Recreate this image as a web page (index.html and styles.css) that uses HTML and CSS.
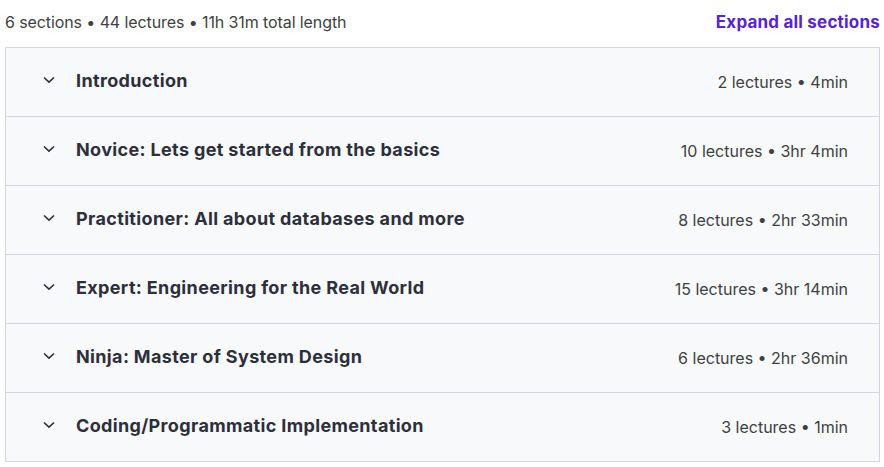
FILE: index.html
```html
<!DOCTYPE html>
<html lang="en">
<head>
    <meta charset="UTF-8">
    <title>Course content</title>
    <link rel="stylesheet" href="styles.css">
</head>
<body>
    <div class="curriculum">
        <div class="summary">
            <span class="summary-text">6 sections • 44 lectures • 11h 31m total length</span>
            <button class="expand-all">Expand all sections</button>
        </div>
        <div class="sections">
            <div class="section">
                <svg class="chevron" viewBox="0 0 12 8" width="12" height="8"><path d="M1 1.5 L6 6.2 L11 1.5" /></svg>
                <span class="section-title">Introduction</span>
                <span class="section-meta">2 lectures • 4min</span>
            </div>
            <div class="section">
                <svg class="chevron" viewBox="0 0 12 8" width="12" height="8"><path d="M1 1.5 L6 6.2 L11 1.5" /></svg>
                <span class="section-title">Novice: Lets get started from the basics</span>
                <span class="section-meta">10 lectures • 3hr 4min</span>
            </div>
            <div class="section">
                <svg class="chevron" viewBox="0 0 12 8" width="12" height="8"><path d="M1 1.5 L6 6.2 L11 1.5" /></svg>
                <span class="section-title">Practitioner: All about databases and more</span>
                <span class="section-meta">8 lectures • 2hr 33min</span>
            </div>
            <div class="section">
                <svg class="chevron" viewBox="0 0 12 8" width="12" height="8"><path d="M1 1.5 L6 6.2 L11 1.5" /></svg>
                <span class="section-title">Expert: Engineering for the Real World</span>
                <span class="section-meta">15 lectures • 3hr 14min</span>
            </div>
            <div class="section">
                <svg class="chevron" viewBox="0 0 12 8" width="12" height="8"><path d="M1 1.5 L6 6.2 L11 1.5" /></svg>
                <span class="section-title">Ninja: Master of System Design</span>
                <span class="section-meta">6 lectures • 2hr 36min</span>
            </div>
            <div class="section">
                <svg class="chevron" viewBox="0 0 12 8" width="12" height="8"><path d="M1 1.5 L6 6.2 L11 1.5" /></svg>
                <span class="section-title">Coding/Programmatic Implementation</span>
                <span class="section-meta">3 lectures • 1min</span>
            </div>
        </div>
    </div>
</body>
</html>
```

FILE: styles.css
```css
body {
    margin: 0;
    font-family: Inter, "Noto Sans", sans-serif;
    color: #2d2f31;
    background: #fff;
}
.curriculum {
    width: 875px;
    margin-left: 5px;
}
.summary {
    display: flex;
    justify-content: space-between;
    align-items: center;
    height: 44px;
    padding-bottom: 3px;
}
.summary-text {
    font-size: 16px;
    letter-spacing: -0.1px;
    color: #3e4143;
}
.expand-all {
    background: none;
    border: none;
    padding: 0;
    font-family: inherit;
    font-size: 17px;
    font-weight: 700;
    letter-spacing: 0.2px;
    color: #5624d0;
    cursor: pointer;
}
.sections {
    border: 1px solid #d1d7dc;
}
.section {
    display: flex;
    align-items: center;
    height: 68px;
    padding: 0 31px 0 37px;
    background: #f7f9fa;
    border-bottom: 1px solid #d1d7dc;
}
.section:last-child {
    border-bottom: none;
}
.chevron {
    fill: none;
    stroke: #2d2f3b;
    stroke-width: 1.6;
    margin-right: 21px;
    margin-bottom: 4px;
}
.section-title {
    flex: 1;
    font-size: 18px;
    font-weight: 700;
    letter-spacing: 0.35px;
    color: #2d2f3b;
    margin-bottom: 4px;
}
.section-meta {
    font-size: 16px;
    color: #3e4143;
}
```
